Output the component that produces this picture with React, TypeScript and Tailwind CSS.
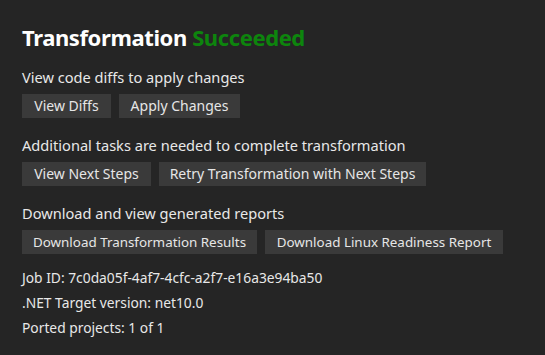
import React from 'react';

type Action = { label: string; width: string; small?: boolean };

const Btn = ({ label, width, small }: Action) => (
  <button
    className={`${width} ${small ? 'text-[13.4px]' : 'text-[14px]'} h-6 bg-[#3a3a3a] text-[#e6e6e6] leading-6 text-center whitespace-nowrap hover:bg-[#454545]`}
  >
    {label}
  </button>
);

const sections: { title: string; buttons: Action[] }[] = [
  {
    title: 'View code diffs to apply changes',
    buttons: [
      { label: 'View Diffs', width: 'w-[89px]' },
      { label: 'Apply Changes', width: 'w-[121px]' },
    ],
  },
  {
    title: 'Additional tasks are needed to complete transformation',
    buttons: [
      { label: 'View Next Steps', width: 'w-[129px]' },
      { label: 'Retry Transformation with Next Steps', width: 'w-[267px]' },
    ],
  },
  {
    title: 'Download and view generated reports',
    buttons: [
      { label: 'Download Transformation Results', width: 'w-[235px]', small: true },
      { label: 'Download Linux Readiness Report', width: 'w-[238px]', small: true },
    ],
  },
];

export default function App() {
  return (
    <div
      className="w-[545px] h-[355px] bg-[#252525] text-[#e8e8e8] px-[22px] pt-[23px]"
      style={{ fontFamily: '"Segoe UI", "Noto Sans", "Open Sans", sans-serif' }}
    >
      <h1 className="text-[22px] font-bold leading-7 tracking-[-0.4px] text-white">
        Transformation <span className="text-[#0d850d]">Succeeded</span>
      </h1>
      <div className="mt-[15px] flex flex-col gap-4">
        {sections.map(s => (
          <div key={s.title}>
            <div className="text-[14.6px] leading-5 translate-y-px">{s.title}</div>
            <div className="flex gap-2 mt-2">
              {s.buttons.map(b => <Btn key={b.label} {...b} />)}
            </div>
          </div>
        ))}
      </div>
      <div className="mt-[11px] flex flex-col text-[13.8px]">
        <div className="leading-[25px]">Job ID: 7c0da05f-4af7-4cfc-a2f7-e16a3e94ba50</div>
        <div className="leading-[25px]">.NET Target version: net10.0</div>
        <div className="leading-[25px]">Ported projects: 1 of 1</div>
      </div>
    </div>
  );
}
